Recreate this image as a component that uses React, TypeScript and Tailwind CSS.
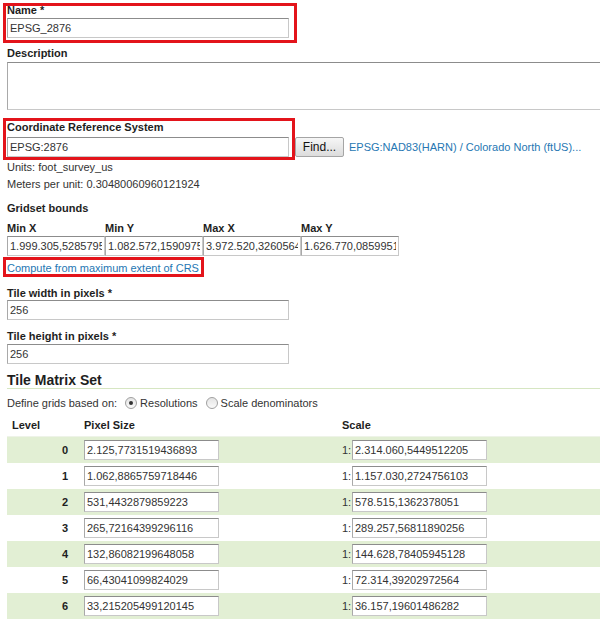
// Gridset editor form (GeoServer-like)
const inputCls =
  "h-[20px] border border-[#c8c8c8] border-t-[#8c8c8c] border-l-[#a9a9a9] bg-white px-[2px] text-[11px] text-[#333] outline-none";

const levels = [
  ["0", "2.125,7731519436893", "2.314.060,5449512205"],
  ["1", "1.062,8865759718446", "1.157.030,2724756103"],
  ["2", "531,4432879859223", "578.515,1362378051"],
  ["3", "265,72164399296116", "289.257,56811890256"],
  ["4", "132,86082199648058", "144.628,78405945128"],
  ["5", "66,43041099824029", "72.314,39202972564"],
  ["6", "33,215205499120145", "36.157,19601486282"],
];

const bounds = [
  ["Min X", "1.999.305,5285795"],
  ["Min Y", "1.082.572,1590975"],
  ["Max X", "3.972.520,3260564"],
  ["Max Y", "1.626.770,0859951"],
];

function Label({ children }: { children: React.ReactNode }) {
  return <div className="text-[11px] leading-[12px] font-bold text-[#1e1e1e]">{children}</div>;
}

function RedFrame({ className }: { className: string }) {
  return <div className={"pointer-events-none absolute border-[3px] border-[#e3141b] " + className}></div>;
}

function Radio({ checked }: { checked?: boolean }) {
  return (
    <span className="inline-flex h-[12px] w-[12px] items-center justify-center rounded-full border border-[#a0a0a0] bg-gradient-to-b from-[#e4e4e4] to-[#fafafa]">
      {checked && <span className="h-[4px] w-[4px] rounded-full bg-[#333]"></span>}
    </span>
  );
}

export default function App() {
  return (
    <div className="h-[619px] w-[600px] overflow-hidden bg-white pl-[7px] pt-[4px] font-['Liberation_Sans',Arial,sans-serif] text-[11px] text-[#333]">
      {/* name */}
      <div className="relative">
        <RedFrame className="left-[-4px] top-[-1px] h-[40px] w-[294px]" />
        <Label>Name *</Label>
        <input readOnly value="EPSG_2876" className={inputCls + " mt-[2px] block w-[282px]"} />
      </div>

      <div className="mt-[9px]">
        <Label>Description</Label>
        <textarea readOnly className="mt-[3px] block h-[48px] w-[600px] resize-none border border-[#c8c8c8] border-t-[#8c8c8c] border-l-[#a9a9a9] outline-none"></textarea>
      </div>

      {/* crs */}
      <div className="relative mt-[11px]">
        <RedFrame className="left-[-4px] top-[-3px] h-[42px] w-[292px]" />
        <Label>Coordinate Reference System</Label>
        <div className="mt-[4px] flex items-center">
          <input readOnly value="EPSG:2876" className={inputCls + " block w-[282px]"} />
          <button className="ml-[6px] h-[20px] w-[49px] rounded-[2px] border border-[#a5a5a5] bg-gradient-to-b from-[#f6f6f6] to-[#dcdcdc] text-[12px] leading-[18px] text-[#111]">
            Find...
          </button>
          <a className="ml-[5px] text-[11px] text-[#2677b3]">EPSG:NAD83(HARN) / Colorado North (ftUS)...</a>
        </div>
      </div>
      <div className="mt-[4px] leading-[12px]">Units: foot_survey_us</div>
      <div className="mt-[5px] leading-[12px]">Meters per unit: 0.30480060960121924</div>

      {/* bounds */}
      <div className="mt-[12px]">
        <Label>Gridset bounds</Label>
      </div>
      <div className="mt-[8px] flex">
        {bounds.map(([name, val]) => (
          <div key={name} className="w-[98px]">
            <Label>{name}</Label>
            <input readOnly value={val} className={inputCls + " mt-[2px] block w-[98px]"} />
          </div>
        ))}
      </div>
      <div className="relative mt-[6px]">
        <RedFrame className="left-[-4px] top-[-5px] h-[20px] w-[201px]" />
        <a className="block leading-[12px] text-[#2677b3]">Compute from maximum extent of CRS</a>
      </div>

      {/* tile size */}
      <div className="mt-[13px]">
        <Label>Tile width in pixels *</Label>
        <input readOnly value="256" className={inputCls + " mt-[1px] block w-[282px]"} />
      </div>
      <div className="mt-[10px]">
        <Label>Tile height in pixels *</Label>
        <input readOnly value="256" className={inputCls + " mt-[2px] block w-[282px]"} />
      </div>

      {/* matrix */}
      <div className="mt-[8px] border-b border-[#d6e6c2] text-[14px] leading-[16px] font-bold text-[#1e1e1e]">
        Tile Matrix Set
      </div>
      <div className="mt-[8px] flex items-center leading-[12px]">
        <span>Define grids based on:</span>
        <span className="ml-[8px] flex"><Radio checked /></span>
        <span className="ml-[3px]">Resolutions</span>
        <span className="ml-[8px] flex"><Radio /></span>
        <span className="ml-[3px]">Scale denominators</span>
      </div>

      <div className="mt-[10px] grid h-[18px] grid-cols-[77px_258px_1fr] border-b border-[#eef3e8] leading-[12px] font-bold text-[#1e1e1e]">
        <div className="pl-[5px]">Level</div>
        <div>Pixel Size</div>
        <div>Scale</div>
      </div>
      {levels.map(([lvl, px, sc], i) => (
        <div
          key={lvl}
          className={
            "grid h-[26px] grid-cols-[77px_258px_1fr] items-center " + (i % 2 === 0 ? "bg-[#e2efd4]" : "bg-white")
          }
        >
          <div className="pr-[16px] text-right font-bold text-[#1e1e1e]">{lvl}</div>
          <div>
            <input readOnly value={px} className={inputCls + " block w-[135px]"} />
          </div>
          <div className="flex items-center">
            <span className="w-[10px] shrink-0 whitespace-nowrap">1:</span>
            <input readOnly value={sc} className={inputCls + " block w-[135px] shrink-0"} />
          </div>
        </div>
      ))}
    </div>
  );
}
